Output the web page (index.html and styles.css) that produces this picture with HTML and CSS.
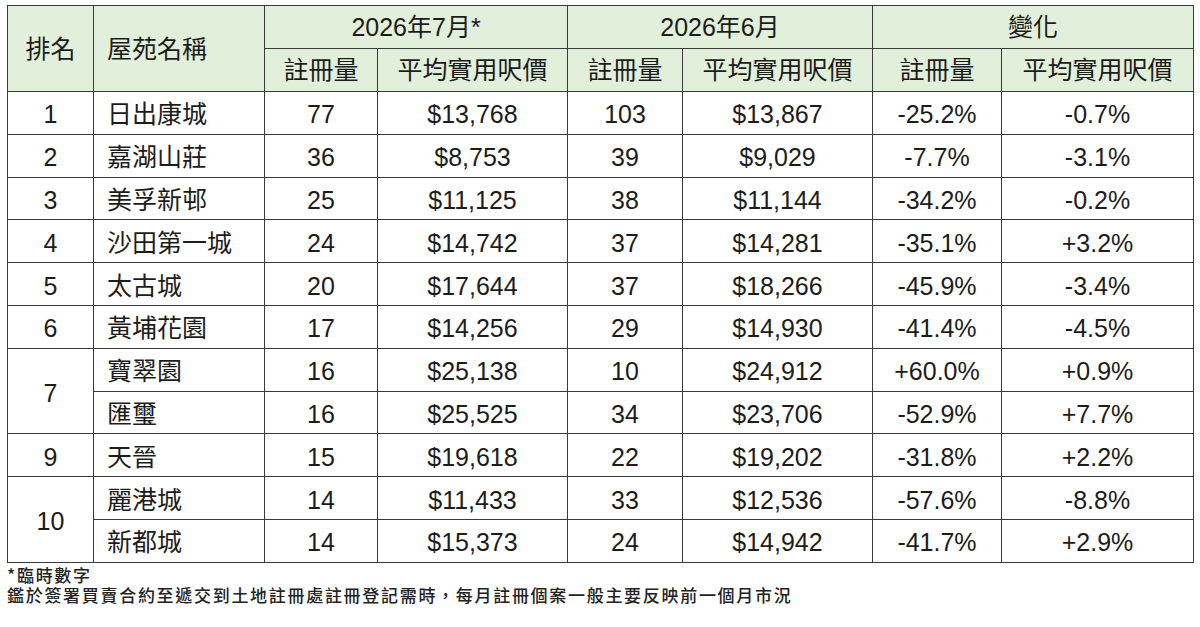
FILE: index.html
```html
<!DOCTYPE html>
<html lang="zh-Hant">
<head>
<meta charset="utf-8">
<title>屋苑註冊量</title>
<link rel="stylesheet" href="styles.css">
</head>
<body>
<div class="page">
  <table class="data">
    <colgroup>
      <col class="w-rank"><col class="w-name">
      <col class="w-cnt"><col class="w-price">
      <col class="w-cnt2"><col class="w-price">
      <col class="w-cnt3"><col class="w-price2">
    </colgroup>
    <thead>
      <tr class="hr">
        <th rowspan="2" class="center">排名</th>
        <th rowspan="2" class="left">屋苑名稱</th>
        <th colspan="2">2026年7月*</th>
        <th colspan="2">2026年6月</th>
        <th colspan="2">變化</th>
      </tr>
      <tr class="hr">
        <th>註冊量</th><th>平均實用呎價</th>
        <th>註冊量</th><th>平均實用呎價</th>
        <th>註冊量</th><th>平均實用呎價</th>
      </tr>
    </thead>
    <tbody>
      <tr><td>1</td><td class="left">日出康城</td><td>77</td><td>$13,768</td><td>103</td><td>$13,867</td><td>-25.2%</td><td>-0.7%</td></tr>
      <tr><td>2</td><td class="left">嘉湖山莊</td><td>36</td><td>$8,753</td><td>39</td><td>$9,029</td><td>-7.7%</td><td>-3.1%</td></tr>
      <tr><td>3</td><td class="left">美孚新邨</td><td>25</td><td>$11,125</td><td>38</td><td>$11,144</td><td>-34.2%</td><td>-0.2%</td></tr>
      <tr><td>4</td><td class="left">沙田第一城</td><td>24</td><td>$14,742</td><td>37</td><td>$14,281</td><td>-35.1%</td><td>+3.2%</td></tr>
      <tr><td>5</td><td class="left">太古城</td><td>20</td><td>$17,644</td><td>37</td><td>$18,266</td><td>-45.9%</td><td>-3.4%</td></tr>
      <tr><td>6</td><td class="left">黃埔花園</td><td>17</td><td>$14,256</td><td>29</td><td>$14,930</td><td>-41.4%</td><td>-4.5%</td></tr>
      <tr><td rowspan="2">7</td><td class="left">寶翠園</td><td>16</td><td>$25,138</td><td>10</td><td>$24,912</td><td>+60.0%</td><td>+0.9%</td></tr>
      <tr><td class="left">匯璽</td><td>16</td><td>$25,525</td><td>34</td><td>$23,706</td><td>-52.9%</td><td>+7.7%</td></tr>
      <tr><td>9</td><td class="left">天晉</td><td>15</td><td>$19,618</td><td>22</td><td>$19,202</td><td>-31.8%</td><td>+2.2%</td></tr>
      <tr><td rowspan="2">10</td><td class="left">麗港城</td><td>14</td><td>$11,433</td><td>33</td><td>$12,536</td><td>-57.6%</td><td>-8.8%</td></tr>
      <tr><td class="left">新都城</td><td>14</td><td>$15,373</td><td>24</td><td>$14,942</td><td>-41.7%</td><td>+2.9%</td></tr>
    </tbody>
  </table>
  <div class="notes">
    <p>*臨時數字</p>
    <p>鑑於簽署買賣合約至遞交到土地註冊處註冊登記需時，每月註冊個案一般主要反映前一個月市況</p>
  </div>
</div>
</body>
</html>
```

FILE: styles.css
```css
html, body {
  margin: 0;
  padding: 0;
  background: #ffffff;
}

.page {
  padding: 5px 0 0 7px;
  font-family: "Liberation Sans", "Noto Sans CJK TC", sans-serif;
  color: #1c1c1c;
}

.data {
  border-collapse: collapse;
  table-layout: fixed;
  width: 1186px;
  font-size: 25px;
}

.w-rank { width: 86px; }
.w-name { width: 171px; }
.w-cnt { width: 113px; }
.w-price { width: 190px; }
.w-cnt2 { width: 115px; }
.w-cnt3 { width: 129px; }
.w-price2 { width: 192px; }

.data th,
.data td {
  border: 1px solid #3a3a3a;
  padding: 0;
  height: 42px;
  text-align: center;
  vertical-align: middle;
  font-weight: normal;
  white-space: nowrap;
  line-height: 30px;
}

.data th {
  background: #e2efda;
}

.data .left {
  text-align: left;
  padding-left: 13px;
}

.data td {
  height: 38.8px;
  padding-top: 3px;
}

.notes {
  margin-top: 2px;
  font-family: "Noto Sans CJK TC", "Liberation Sans", sans-serif;
  font-size: 17px;
  font-weight: 500;
  letter-spacing: 1.7px;
  color: #222222;
}

.notes p {
  margin: 0;
  line-height: 20px;
}
```
